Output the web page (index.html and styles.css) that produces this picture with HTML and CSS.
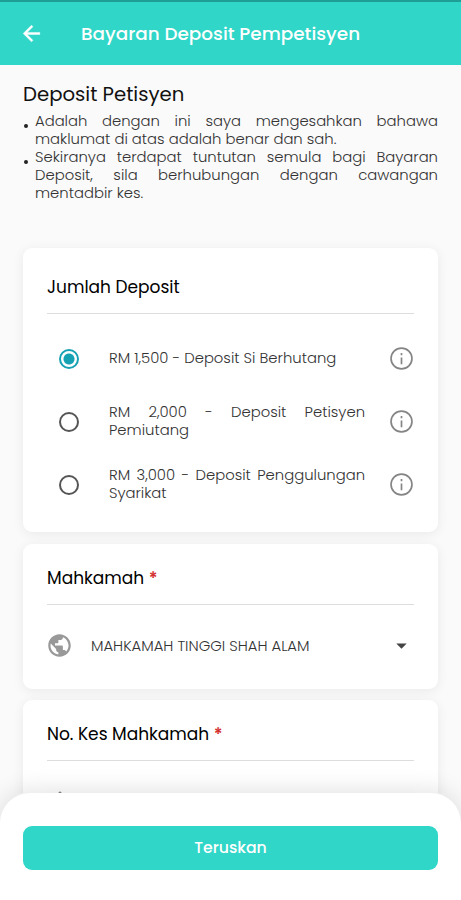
FILE: index.html
```html
<!DOCTYPE html>
<html lang="ms">
<head>
    <meta charset="UTF-8">
    <meta name="viewport" content="width=device-width, initial-scale=1.0">
    <title>Bayaran Deposit Pempetisyen</title>
    <link rel="stylesheet" href="styles.css">
</head>
<body>
    <header class="app-bar">
        <svg class="back" viewBox="0 0 24 24"><path d="M20 11H7.83l5.59-5.59L12 4l-8 8 8 8 1.41-1.41L7.83 13H20z"/></svg>
        <h1>Bayaran Deposit Pempetisyen</h1>
    </header>

    <main>
        <h2>Deposit Petisyen</h2>
        <ul class="notes">
            <li>Adalah dengan ini saya mengesahkan bahawa maklumat di atas adalah benar dan sah.</li>
            <li>Sekiranya terdapat tuntutan semula bagi Bayaran Deposit, sila berhubungan dengan cawangan mentadbir kes.</li>
        </ul>

        <!-- Jumlah deposit -->
        <section class="card card-deposit">
            <h3>Jumlah Deposit</h3>
            <div class="option">
                <span class="radio checked"></span>
                <p>RM 1,500 - Deposit Si Berhutang</p>
                <svg class="info" viewBox="0 0 24 24"><circle cx="12" cy="12" r="9.300"/><path d="M12 11v6M12 7.200v1.800"/></svg>
            </div>
            <div class="option">
                <span class="radio"></span>
                <p>RM 2,000 - Deposit Petisyen Pemiutang</p>
                <svg class="info" viewBox="0 0 24 24"><circle cx="12" cy="12" r="9.300"/><path d="M12 11v6M12 7.200v1.800"/></svg>
            </div>
            <div class="option">
                <span class="radio"></span>
                <p>RM 3,000 - Deposit Penggulungan Syarikat</p>
                <svg class="info" viewBox="0 0 24 24"><circle cx="12" cy="12" r="9.300"/><path d="M12 11v6M12 7.200v1.800"/></svg>
            </div>
        </section>

        <!-- Mahkamah -->
        <section class="card card-court">
            <h3>Mahkamah <span class="required">*</span></h3>
            <div class="select">
                <svg class="globe" viewBox="0 0 24 24"><path d="M12 2C6.480 2 2 6.480 2 12s4.480 10 10 10 10-4.480 10-10S17.520 2 12 2zm-1 17.930c-3.950-.49-7-3.850-7-7.930 0-.62.080-1.210.21-1.790L9 15v1c0 1.100.9 2 2 2v1.930zm6.900-2.540c-.26-.81-1-1.390-1.900-1.390h-1v-3c0-.55-.45-1-1-1H8v-2h2c.55 0 1-.45 1-1V7h2c1.100 0 2-.9 2-2v-.41c2.930 1.190 5 4.060 5 7.410 0 2.080-.8 3.970-2.100 5.390z"/></svg>
                <span class="value">MAHKAMAH TINGGI SHAH ALAM</span>
                <svg class="caret" viewBox="0 0 24 24"><path d="M7 10l5 5 5-5z"/></svg>
            </div>
        </section>

        <!-- No. kes -->
        <section class="card card-case">
            <h3>No. Kes Mahkamah <span class="required">*</span></h3>
            <svg class="pencil" viewBox="0 0 24 24"><path d="M12 2l2 2v16h-4V4z"/></svg>
        </section>
    </main>

    <footer class="bottom-bar">
        <button type="button">Teruskan</button>
    </footer>
</body>
</html>
```

FILE: styles.css
```css
* {
    box-sizing: border-box;
}

body {
    font-family: Poppins, Inter, sans-serif;
    margin: 0;
    height: 900px;
    display: flex;
    flex-direction: column;
    overflow: hidden;
    background-color: #fafafa;
    color: #111;
}

h1, h2, h3, p, ul {
    margin: 0;
    padding: 0;
}

svg {
    display: block;
    flex: none;
}

.app-bar {
    display: flex;
    align-items: center;
    flex: none;
    height: 65px;
    padding-left: 19px;
    border-top: 2px solid #1f9e96;
    background-color: #30d6c8;
    color: white;
}

.back {
    width: 25px;
    height: 25px;
    fill: white;
    stroke: white;
    stroke-width: 0.4;
}

h1 {
    margin-left: 37px;
    font-size: 18.4px;
    font-weight: 500;
}

main {
    flex: 1;
    min-height: 0;
    overflow: hidden;
    padding: 14px 23px 0;
}

h2 {
    font-size: 19.7px;
    font-weight: 400;
    line-height: 30px;
}

.notes {
    margin-top: 3px;
    height: 136px;
    list-style: none;
    font-size: 14.8px;
    font-weight: 300;
    line-height: 18px;
    text-align: justify;
    color: #333;
}

.notes li {
    display: flex;
}

.notes li::before {
    content: "";
    flex: none;
    width: 4px;
    height: 4px;
    margin: 12px 7px 0 1px;
    border-radius: 50%;
    background-color: #222;
}

.card {
    margin-bottom: 12px;
    padding: 0 24px;
    border-radius: 9px;
    background-color: white;
    box-shadow: 0 2px 12px rgba(0, 0, 0, 0.07);
}

h3 {
    height: 61px;
    padding-top: 22px;
    border-bottom: 1px solid #ddd;
    font-size: 17px;
    font-weight: 400;
    line-height: 25px;
    color: black;
}

.required {
    font-weight: 600;
    color: #d32f2f;
}

.card-deposit {
    height: 284px;
    padding-top: 5px;
}

.card-deposit h3 {
    margin-bottom: 13px;
}

.option {
    display: flex;
    align-items: center;
    height: 63px;
    padding-left: 12px;
}

.radio {
    flex: none;
    width: 20px;
    height: 20px;
    border: 2px solid #555;
    border-radius: 50%;
}

.radio.checked {
    border-color: #17a2b4;
    background: radial-gradient(circle, #17a2b4 5px, white 6px);
}

.option p {
    width: 257px;
    margin-left: 30px;
    padding-bottom: 1px;
    font-size: 14.8px;
    font-weight: 300;
    line-height: 18px;
    text-align: justify;
    color: #333;
}

.info {
    width: 27px;
    height: 27px;
    margin-left: 23px;
    margin-right: -1px;
    fill: none;
    stroke: #858585;
    stroke-width: 1.5;
}

.card-court {
    height: 145px;
    margin-bottom: 11px;
}

.select {
    display: flex;
    align-items: center;
    height: 81px;
}

.globe {
    width: 27px;
    height: 27px;
    margin-left: -1px;
    fill: #999;
}

.value {
    flex: 1;
    margin-left: 18px;
    font-size: 14.8px;
    font-weight: 300;
    color: #333;
}

.caret {
    width: 25px;
    height: 25px;
    fill: #444;
}

.card-case {
    height: 145px;
}

.pencil {
    width: 26px;
    height: 26px;
    margin-top: 28px;
    fill: #888;
}

.bottom-bar {
    position: relative;
    flex: none;
    height: 107px;
    padding: 33px 23px 0;
    border-radius: 30px 30px 0 0;
    background-color: white;
    box-shadow: 0 -2px 24px rgba(0, 0, 0, 0.12);
}

button {
    width: 100%;
    height: 44px;
    padding-bottom: 3px;
    border: none;
    border-radius: 9px;
    background-color: #30d6c8;
    color: white;
    font-family: inherit;
    font-size: 15.7px;
    font-weight: 500;
    cursor: pointer;
}
```
